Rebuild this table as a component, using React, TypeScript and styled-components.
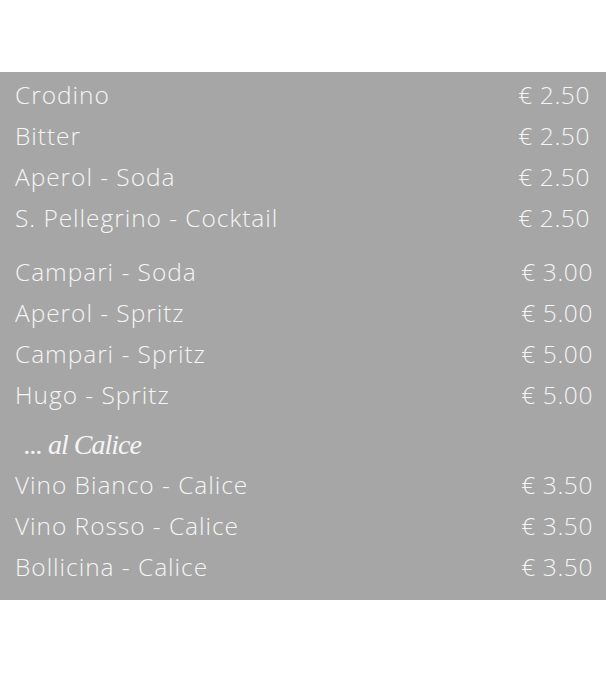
import React from "react";
import styled, { createGlobalStyle } from "styled-components";

const GlobalStyle = createGlobalStyle`
  html, body {
    margin: 0;
    padding: 0;
    background: #ffffff;
  }
`;

const Page = styled.div`
  width: 606px;
  height: 674px;
  padding-top: 72px;
  box-sizing: border-box;
`;

const Panel = styled.section`
  background: #a6a6a6;
  height: 528px;
  box-sizing: border-box;
  padding: 2px 13px 12px 15px;
  display: flex;
  flex-direction: column;
`;

const Group = styled.div<{ $gap?: number }>`
  display: flex;
  flex-direction: column;
  margin-top: ${(p) => p.$gap ?? 0}px;
`;

const Row = styled.div<{ $shift?: number }>`
  height: 41px;
  display: flex;
  align-items: center;
  justify-content: space-between;
  font-family: "Open Sans", "Liberation Sans", sans-serif;
  font-weight: 300;
  font-size: 24.5px;
  color: #f5f5f5;
  letter-spacing: 0.95px;
  padding-right: ${(p) => p.$shift ?? 0}px;
`;

const Name = styled.span``;

const Price = styled.span`
  white-space: nowrap;
  letter-spacing: 0.6px;
`;

const Heading = styled.h2`
  margin: 0;
  height: 49px;
  display: flex;
  align-items: center;
  padding-left: 9px;
  padding-top: 11px;
  box-sizing: border-box;
  font-family: "Liberation Serif", "Times New Roman", serif;
  font-style: italic;
  font-weight: 400;
  font-size: 28px;
  letter-spacing: -1px;
  color: #f5f5f5;
`;

type Item = { name: string; price: string };

const aperitivi: Item[] = [
  { name: "Crodino", price: "€ 2.50" },
  { name: "Bitter", price: "€ 2.50" },
  { name: "Aperol - Soda", price: "€ 2.50" },
  { name: "S. Pellegrino - Cocktail", price: "€ 2.50" },
];

const spritz: Item[] = [
  { name: "Campari - Soda", price: "€ 3.00" },
  { name: "Aperol - Spritz", price: "€ 5.00" },
  { name: "Campari - Spritz", price: "€ 5.00" },
  { name: "Hugo - Spritz", price: "€ 5.00" },
];

const calice: Item[] = [
  { name: "Vino Bianco - Calice", price: "€ 3.50" },
  { name: "Vino Rosso - Calice", price: "€ 3.50" },
  { name: "Bollicina - Calice", price: "€ 3.50" },
];

function MenuRows({ items, shift }: { items: Item[]; shift?: number }) {
  return (
    <>
      {items.map((it) => (
        <Row key={it.name} $shift={shift}>
          <Name>{it.name}</Name>
          <Price>{it.price}</Price>
        </Row>
      ))}
    </>
  );
}

function App() {
  return (
    <Page>
      <GlobalStyle />
      <Panel>
        <Group>
          <MenuRows items={aperitivi} shift={3} />
        </Group>
        <Group $gap={13}>
          <MenuRows items={spritz} />
          <Heading>... al Calice</Heading>
          <MenuRows items={calice} />
        </Group>
      </Panel>
    </Page>
  );
}

export default App;
